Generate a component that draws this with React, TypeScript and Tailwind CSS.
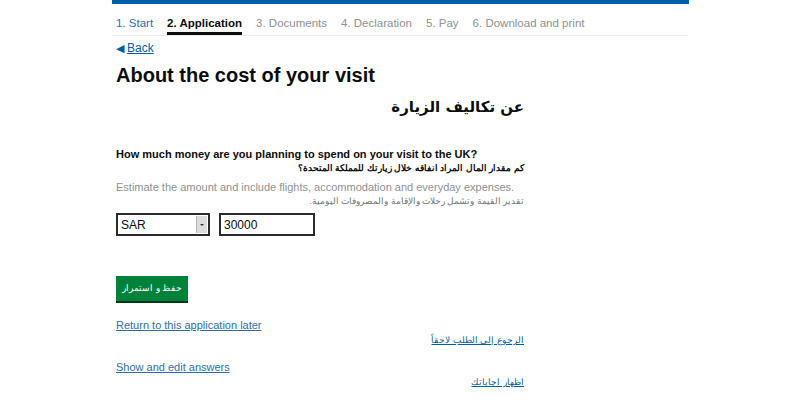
import React from "react";

export default function App() {
  const steps = [
    { t: "1. Start", c: "text-[#2b6fb0] border-transparent" },
    { t: "2. Application", c: "text-[#0b0c0c] font-bold border-[#0b0c0c]" },
    { t: "3. Documents", c: "text-[#8e9194] border-transparent" },
    { t: "4. Declaration", c: "text-[#8e9194] border-transparent" },
    { t: "5. Pay", c: "text-[#8e9194] border-transparent" },
    { t: "6. Download and print", c: "text-[#8e9194] border-transparent" },
  ];
  return (
    <div className="w-[800px] h-[418px] bg-white overflow-hidden" style={{ fontFamily: '"Liberation Sans", Arial, sans-serif' }}>
      <div className="ml-[112px] w-[577px]">
        <div className="h-[4px] bg-[#005ea5]" />
        <div className="flex items-end gap-[14px] pl-[4px] pt-[11px] border-b border-[#eeeeee] text-[11.5px]">
          {steps.map((s, i) => (
            <div key={i} className={`${s.c} pb-[1px] border-b-[3px] leading-[16px]`}>
              {s.t}
            </div>
          ))}
        </div>
      </div>
      <div className="ml-[116px] w-[408px]">
        <div className="mt-[4px] flex items-center gap-[3px] text-[12px] text-[#005ea5] leading-[16px]">
          <span className="text-[11px]">◀</span>
          <span className="underline">Back</span>
        </div>
        <h1 className="mt-[6px] text-[20px] font-bold text-[#0b0c0c] leading-[26px]">About the cost of your visit</h1>
        <div dir="rtl" className="mt-[6px] font-bold text-[#0b0c0c] leading-[26px]" style={{ fontFamily: '"DejaVu Sans", "Noto Sans", sans-serif' }}>
          <span className="text-[15px]">عن تكاليف الزيارة</span>
        </div>
        <div className="mt-[27px] text-[11px] font-bold text-[#0b0c0c] leading-[14px]">How much money are you planning to spend on your visit to the UK?</div>
        <div dir="rtl" className="text-[9px] font-bold text-[#0b0c0c] leading-[14px]">كم مقدار المال المراد انفاقه خلال زيارتك للمملكة المتحدة؟</div>
        <div className="mt-[5px] text-[11px] text-[#8e9194] leading-[14px]">Estimate the amount and include flights, accommodation and everyday expenses.</div>
        <div dir="rtl" className="text-[8.5px] text-[#6f777b] leading-[14px]">تقدير القيمة وتشمل رحلات والإقامة والمصروفات اليومية.</div>
        <div className="mt-[5px] flex gap-[9px]">
          <div className="w-[94px] h-[23px] border-2 border-[#2b2b2b] flex items-stretch">
            <div className="flex-1 pl-[3px] text-[12px] text-[#0b0c0c] flex items-center">SAR</div>
            <div className="w-[11px] my-[1px] mr-[1px] bg-[#dcdcdc] border-l border-[#b5b5b5] flex items-center justify-center">
              <span className="block w-0 h-0 border-l-[2px] border-r-[2px] border-t-[2px] border-l-transparent border-r-transparent border-t-[#333]" />
            </div>
          </div>
          <div className="w-[96px] h-[23px] border-2 border-[#2b2b2b] pl-[3px] text-[12px] text-[#0b0c0c] flex items-center">30000</div>
        </div>
        <div className="mt-[40px] w-[72px] h-[25px] bg-[#00823b] shadow-[0_2px_0_#003618] flex items-center justify-center text-white text-[9px]" dir="rtl">
          حفظ و استمرار
        </div>
        <div className="mt-[17px] text-[11px] text-[#2b6fb0] underline leading-[14px]">Return to this application later</div>
        <div dir="rtl" className="mt-[1px] text-[9px] text-[#005ea5] underline leading-[14px]">الرجوع إلى الطلب لاحقاً</div>
        <div className="mt-[13px] text-[11px] text-[#2b6fb0] underline leading-[14px]">Show and edit answers</div>
        <div dir="rtl" className="mt-[1px] text-[9px] text-[#005ea5] underline leading-[14px]">اظهار اجاباتك</div>
      </div>
    </div>
  );
}
